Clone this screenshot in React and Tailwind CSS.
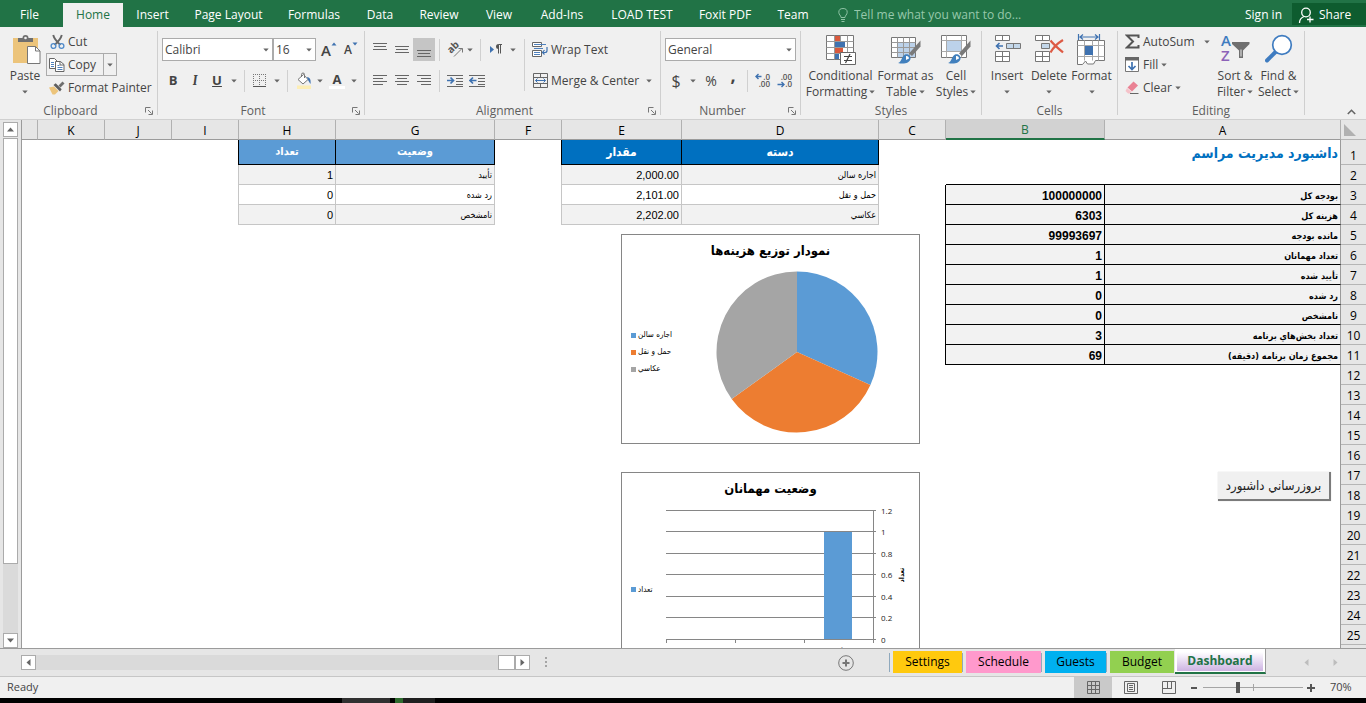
import React from "react";

/* ---------- small building blocks ---------- */

function Caret({ className = "" }) {
  return (
    <svg width="6" height="4" viewBox="0 0 6 4" className={`shrink-0 ${className}`} aria-hidden="true">
      <path d="M0.3 0.5h5.4L3 3.5z" fill="#666" />
    </svg>
  );
}

function Launcher() {
  return (
    <svg width="8" height="8" viewBox="0 0 8 8" fill="none" stroke="#777" aria-hidden="true">
      <path d="M0.5 5.5v-5h5M3 3l3.6 3.6M7.5 3.5v4h-4" />
    </svg>
  );
}

function Divider() {
  return <div className="my-1 w-px shrink-0 bg-[#cfcfcf]" />;
}

function Sep() {
  return <span className="h-[22px] w-px shrink-0 bg-[#d0d0d0]" />;
}

function Group({ label, width, launcher, children }) {
  return (
    <>
      <section className={`flex shrink-0 flex-col ${width}`} aria-label={label}>
        <div className="flex h-[76px]">{children}</div>
        <div className="flex h-4 items-center">
          <span className={`flex-1 text-center leading-4 text-[#5e5e5e] ${launcher ? "pr-1" : ""}`}>{label}</span>
          {launcher && (
            <button className="mr-1 flex" aria-label={`${label} settings`}>
              <Launcher />
            </button>
          )}
        </div>
      </section>
      <Divider />
    </>
  );
}

function Tool({ label, width = "w-[22px]", active, children }) {
  return (
    <button
      aria-label={label}
      className={`flex h-[23px] shrink-0 items-center justify-center ${width} ${active ? "bg-[#c5c5c5]" : ""}`}
    >
      {children}
    </button>
  );
}

function SmallButton({ icon, label, caret }) {
  return (
    <button className="flex h-[23px] items-center whitespace-nowrap">
      <span className="flex w-5 shrink-0 justify-center">{icon}</span>
      <span className="px-px">{label}</span>
      {caret && <Caret className={caret} />}
    </button>
  );
}

function BigButton({ icon, lines, width }) {
  return (
    <button className={`flex shrink-0 flex-col items-center pt-[7px] ${width}`}>
      <span className="flex h-[34px] items-start">{icon}</span>
      <span className="flex h-4 items-center whitespace-nowrap leading-4">{lines[0]}</span>
      <span className="flex h-4 items-center gap-0.5 whitespace-nowrap leading-4">
        {lines[1]}
        <Caret />
      </span>
    </button>
  );
}

function Picker({ label, value, width }) {
  return (
    <label className={`relative block h-[23px] ${width}`}>
      <span className="sr-only">{label}</span>
      <select
        defaultValue={value}
        className="h-full w-full appearance-none rounded-none border border-[#ababab] bg-white pl-0.5 text-[#444] outline-none"
      >
        <option>{value}</option>
      </select>
      <Caret className="absolute top-[10px] right-1" />
    </label>
  );
}

/* ---------- ribbon icons ---------- */

const PasteIcon = (
  <svg width="30" height="31" viewBox="0 0 30 31" aria-hidden="true">
    <path d="M1 4h25v25H1z" fill="#ecc47b" />
    <path d="M6 8V4h4.500a3 3 0 0 1 6 0H21v4z" fill="#6f6f6f" />
    <circle cx="13.500" cy="4" r="1.300" fill="#f0f0f0" />
    <path d="M15.500 12.500h8l4.500 4.500v12.500H15.500z" fill="#fff" stroke="#777" />
    <path d="M23.500 12.500V17H28" fill="none" stroke="#777" />
  </svg>
);

const CutIcon = (
  <svg width="15" height="16" viewBox="0 0 15 16" fill="none" aria-hidden="true">
    <path d="M3.200 1C4 4 6.500 7.500 10.500 11M11.800 1C11 4 8.500 7.500 4.500 11" stroke="#666" strokeWidth="1.900" />
    <circle cx="3.500" cy="12" r="2.400" stroke="#4f8ac9" strokeWidth="1.300" />
    <circle cx="11.500" cy="12" r="2.400" stroke="#4f8ac9" strokeWidth="1.300" />
  </svg>
);

const CopyIcon = (
  <svg width="16" height="14" viewBox="0 0 16 14" aria-hidden="true">
    <path d="M.5.5h5l3 3v7h-8z" fill="#fff" stroke="#666" />
    <path d="M2 4.500h3M2 6.500h3M2 8.500h3" stroke="#4f81bd" />
    <path d="M6.500 3.500h5l3.500 3v7H6.500z" fill="#fff" stroke="#666" />
    <path d="M11 3.500v3.500h4" fill="none" stroke="#666" />
    <path d="M8.500 7.500h2M8.500 9.500h5M8.500 11.500h5" stroke="#4f81bd" />
  </svg>
);

const PainterIcon = (
  <svg width="16" height="14" viewBox="0 0 16 14" aria-hidden="true">
    <path d="M0 6.500l5-1 4.500 4.500L6 13.500H3.500z" fill="#ecc47b" />
    <path d="M4.500 4l2.200-1.800 6 6L11 10.500z" fill="#5e5e5e" />
    <path d="M9.500 4.500L13.500.5l2 2-4 4z" fill="#6e6e6e" />
  </svg>
);

const GrowFont = (
  <span className="flex items-start">
    <span className="text-[15px] leading-5 font-semibold">A</span>
    <svg width="6" height="4" viewBox="0 0 6 4" className="mt-0.5" aria-hidden="true">
      <path d="M.5 3.500h5L3 .5z" fill="#3f72b0" />
    </svg>
  </span>
);

const ShrinkFont = (
  <span className="flex items-start">
    <span className="text-xs leading-5 font-semibold">A</span>
    <svg width="6" height="4" viewBox="0 0 6 4" className="mt-0.5" aria-hidden="true">
      <path d="M.5.5h5L3 3.500z" fill="#3f72b0" />
    </svg>
  </span>
);

const BordersIcon = (
  <svg width="13" height="13" viewBox="0 0 13 13" fill="none" stroke="#777" aria-hidden="true">
    <path d="M0 .5h13M0 6.500h13M.5 0v12M6.500 0v12M12.500 0v12" strokeDasharray="1 1" />
    <path d="M0 12.500h13" stroke="#555" />
  </svg>
);

const FillColorIcon = (
  <svg width="15" height="17" viewBox="0 0 15 17" aria-hidden="true">
    <path d="M1 7.500L6.500 2.500l4.500 5-5 4.500z" fill="#fff" stroke="#777" />
    <path d="M4.500 5V2.500a1.500 1.500 0 0 1 3 0V6" fill="none" stroke="#777" />
    <path d="M10 5c3 .5 4 2.500 3.500 7-1-1.500-2-3-2.500-4z" fill="#3f72b0" />
    <path d="M0 13.500h14V17H0z" fill="#fdeeb5" />
  </svg>
);

const FontColorIcon = (
  <span className="flex flex-col items-center">
    <span className="text-[13px] leading-[14px] font-bold">A</span>
    <span className="h-[3px] w-4 bg-white" />
  </span>
);

function Lines({ rows, top = 0 }) {
  return (
    <svg width="14" height="15" viewBox="0 0 14 15" stroke="#666" aria-hidden="true">
      {rows.map(([x, w], i) => (
        <path key={i} d={`M${x} ${top + i * 3 + 0.5}h${w}`} />
      ))}
    </svg>
  );
}
const VERTICAL = [[0, 14], [1, 12], [0, 14]];
const LEFT = [[0, 14], [0, 10], [0, 14], [0, 10]];
const CENTER = [[0, 14], [2, 10], [0, 14], [2, 10]];
const RIGHT = [[0, 14], [4, 10], [0, 14], [4, 10]];

const OrientationIcon = (
  <svg width="17" height="16" viewBox="0 0 17 16" aria-hidden="true">
    <text x="0" y="0" transform="translate(4 12) rotate(-45)" fontSize="10" fontWeight="700" fill="#555">
      ab
    </text>
    <path d="M7 14.500L15 6.500M11.500 6.500H15.500V10.500" fill="none" stroke="#777" />
  </svg>
);

const DirectionIcon = (
  <svg width="12" height="11" viewBox="0 0 12 11" aria-hidden="true">
    <path d="M0 2l4 3.500L0 9z" fill="#3f72b0" />
    <path d="M8.500.5h3.500M8.500.5v9M10.500.5v9" stroke="#555" fill="none" />
    <path d="M8.500 0a2.500 2.500 0 0 0 0 5z" fill="#555" />
  </svg>
);

function IndentIcon({ out }) {
  return (
    <svg width="16" height="14" viewBox="0 0 16 14" fill="none" aria-hidden="true">
      <path d="M0 1.500h16M9 4.500h7M9 7.500h7M0 12.500h16M9 10.500h7" stroke="#666" />
      <path
        d={out ? "M7.500 6.500H1M4 3.500l-3 3 3 3" : "M0 6.500h6.500M3.500 3.500l3 3-3 3"}
        stroke="#3f72b0"
        strokeWidth="1.700"
      />
    </svg>
  );
}

const WrapIcon = (
  <svg width="16" height="16" viewBox="0 0 16 16" fill="none" aria-hidden="true">
    <path d="M.5.5h9v4h-9zM.5 8.500h9v6h-9z" stroke="#666" fill="#fff" />
    <path d="M2 2.500h12M2 6.500h9M2 10.500h6M2 12.500h6" stroke="#4f81bd" />
    <path d="M15 5v3.500a2 2 0 0 1-2 2h-2M12.500 8L10.500 10.500l2 2" stroke="#3f72b0" strokeWidth="1.200" />
  </svg>
);

const MergeIcon = (
  <svg width="15" height="15" viewBox="0 0 15 15" fill="none" aria-hidden="true">
    <path d="M.5.5h14v14H.5zM.5 4.500h14M.5 10.500h14M7.500.5v4M7.500 10.500v4" stroke="#666" />
    <path d="M2.500 7.500h10M4.500 5.500l-2 2 2 2M10.500 5.500l2 2-2 2" stroke="#3f72b0" />
  </svg>
);

function DecimalIcon({ more }) {
  return (
    <svg width="16" height="15" viewBox="0 0 16 15" aria-hidden="true">
      <text x="15" y="6.500" textAnchor="end" fontSize="8" fontWeight="600" fill="#555">
        {more ? ".0" : ".00"}
      </text>
      <text x="15" y="14" textAnchor="end" fontSize="8" fontWeight="600" fill="#555">
        {more ? ".00" : ".0"}
      </text>
      <path
        d={more ? "M6.500 3.500H1M3.500 1L1 3.500 3.500 6" : "M0.500 11.500H7M4.500 9L7 11.500 4.500 14"}
        fill="none"
        stroke="#3f72b0"
        strokeWidth="1.400"
      />
    </svg>
  );
}

const ConditionalIcon = (
  <svg width="30" height="31" viewBox="0 0 30 31" aria-hidden="true">
    <path d="M.5 1.500h27v24H.5z" fill="#fff" stroke="#777" />
    <path d="M.5 7.500h27M.5 13.500h27M.5 19.500h27M8.500 1.500v24M14.500 1.500v24M21.500 1.500v24" stroke="#999" fill="none" />
    <path d="M9 2h5v5H9zM9 14h8v5H9z" fill="#d9593d" />
    <path d="M9 8h10v5H9zM9 20h4v5H9z" fill="#3f72b0" />
    <path d="M14.500 18.500h15v12h-15z" fill="#fff" stroke="#666" />
    <path d="M18 22.500h8M18 26.500h8M24 20l-4.500 9" stroke="#444" strokeWidth="1.200" />
  </svg>
);

const Brush = (
  <>
    <path d="M29.500 6.500v6L21 22l-3-2.500z" fill="#7a7a7a" />
    <path d="M7 29c4-1 3-6 7-8.500 3-1 6 1 5.500 4.500C18.500 29 13 30.500 7 29z" fill="#4180bd" />
    <path d="M15 22a2.500 2.500 0 0 1 3 2.500L15 26z" fill="#fff" />
  </>
);

const FormatTableIcon = (
  <svg width="30" height="31" viewBox="0 0 30 31" aria-hidden="true">
    <path d="M.5 3.500h24v20H.5z" fill="#fff" stroke="#777" />
    <path d="M7 9h17v14H7z" fill="#bcd2ea" />
    <path d="M.5 8.500h24M.5 13.500h24M.5 18.500h24M6.500 3.500v20M12.500 3.500v20M18.500 3.500v20" stroke="#999" fill="none" />
    {Brush}
  </svg>
);

const CellStylesIcon = (
  <svg width="30" height="31" viewBox="0 0 30 31" aria-hidden="true">
    <path d="M.5 1.500h25v22H.5z" fill="#fff" stroke="#777" />
    <path d="M.5 6.500h25M.5 17.500h25M5.500 1.500v22M20.500 1.500v22" stroke="#aaa" fill="none" />
    <path d="M6 7h14v10H6z" fill="#bcd2ea" />
    {Brush}
  </svg>
);

const InsertIcon = (
  <svg width="27" height="30" viewBox="0 0 27 30" aria-hidden="true">
    <path d="M1.500 1.500h14v5h-14zM8.500 1.500v5M1.500 17.500h14v10h-14zM8.500 17.500v10M1.500 22.500h14" fill="#fff" stroke="#777" />
    <path d="M12.500 9.500h14v5h-14zM19.500 9.500v5" fill="#c3d7ea" stroke="#777" />
    <path d="M9 12H3M5.500 9L2.500 12l3 3" fill="none" stroke="#3f72b0" strokeWidth="1.600" />
  </svg>
);

const DeleteIcon = (
  <svg width="30" height="30" viewBox="0 0 30 30" aria-hidden="true">
    <path d="M1.500 1.500h14v5h-14zM8.500 1.500v5M1.500 17.500h14v10h-14zM8.500 17.500v10M1.500 22.500h14" fill="#fff" stroke="#777" />
    <path d="M7.500 9.500h8v5h-8z" fill="#c3d7ea" stroke="#777" />
    <path d="M16.500 6.500C20 11 25 15 29 18.500M29 6C24 9 19 14 16.500 18.500" fill="none" stroke="#dd5a44" strokeWidth="2.200" />
  </svg>
);

const FormatCellsIcon = (
  <svg width="29" height="31" viewBox="0 0 29 31" aria-hidden="true">
    <path d="M1.500 0v6M22.500 0v6M3.500 3h17M6 .5L3 3l3 2.500M18 .5L21 3l-3 2.500" fill="none" stroke="#3f72b0" strokeWidth="1.200" />
    <path d="M.5 6.500h27v20h-9l-2 3.500h-6l-2-3-3 3.500h-5z" fill="#fff" stroke="#777" />
    <path d="M.5 11.500h27M.5 22.500h27M7.500 6.500v20M15.500 6.500v20M21.500 6.500v20" stroke="#aaa" fill="none" />
    <path d="M8 12h8v9H8z" fill="#3f72b0" />
  </svg>
);

const SumIcon = (
  <svg width="15" height="15" viewBox="0 0 15 15" fill="none" aria-hidden="true">
    <path d="M13.500 4V1.500H2L8 7.500 2 13.500h11.500V11" stroke="#555" strokeWidth="2" />
  </svg>
);

const FillIcon = (
  <svg width="14" height="15" viewBox="0 0 14 15" fill="none" aria-hidden="true">
    <path d="M.5.5h13v14H.5z" fill="#fff" stroke="#777" />
    <path d="M0 0h14v3.500H0z" fill="#666" />
    <path d="M7 5v7M3.500 9L7 12.500 10.500 9" stroke="#3f72b0" strokeWidth="1.700" />
  </svg>
);

const ClearIcon = (
  <svg width="14" height="14" viewBox="0 0 14 14" aria-hidden="true">
    <path d="M8.500.5l4.500 4-6 6-4.500-4z" fill="#ea8294" />
    <path d="M2 7l4.500 4L5 12.500H3L.5 10z" fill="#f5c2c9" />
    <path d="M5 12.500h8.500" stroke="#666" />
  </svg>
);

const SortIcon = (
  <svg width="30" height="30" viewBox="0 0 30 30" aria-hidden="true">
    <text x="1" y="12" fontSize="15" fontWeight="600" fill="#3f7cc0">A</text>
    <text x="1" y="27" fontSize="15" fontWeight="600" fill="#8c62b8">Z</text>
    <path d="M12 8h17.500v2L23 16.500V24h-4v-7.500L12 10z" fill="#6f6f6f" />
    <path d="M20.500 15.500v7h1v-7z" fill="#eee" />
  </svg>
);

const FindIcon = (
  <svg width="28" height="29" viewBox="0 0 28 29" aria-hidden="true">
    <path d="M2 26.500L11 17.500" stroke="#3f7cc0" strokeWidth="4" strokeLinecap="round" />
    <circle cx="17" cy="11" r="9.300" fill="#fff" stroke="#3f7cc0" strokeWidth="1.700" />
  </svg>
);

/* ---------- title bar and ribbon ---------- */

const MENU = [
  ["Insert", "w-[59px]"],
  ["Page Layout", "w-[93px]"],
  ["Formulas", "w-[78px]"],
  ["Data", "w-[54px]"],
  ["Review", "w-16"],
  ["View", "w-14"],
  ["Add-Ins", "w-[70px]"],
  ["LOAD TEST", "w-[90px]"],
  ["Foxit PDF", "w-[76px]"],
  ["Team", "w-[60px]"],
];

function MenuBar() {
  return (
    <nav className="flex h-[27px] shrink-0 items-stretch bg-[#217346] pt-[3px] text-[12px] whitespace-nowrap text-white">
      <button className="w-[63px] pr-1">File</button>
      <button className="w-[60px] bg-[#f0f0f0] text-[#217346]">Home</button>
      {MENU.map(([name, width]) => (
        <button key={name} className={width}>
          {name}
        </button>
      ))}
      <label className="flex min-w-0 flex-1 items-center gap-1.5 pl-[15px]">
        <svg width="10" height="14" viewBox="0 0 10 14" fill="none" stroke="#8fc3a5" aria-hidden="true">
          <path d="M3 9.500C3 7.500 .8 6.700 .8 4.300a4.200 3.800 0 0 1 8.400 0C9.200 6.700 7 7.500 7 9.500zM3 11.500h4M3.500 13.500h3" />
        </svg>
        <input
          aria-label="Tell me what you want to do"
          placeholder="Tell me what you want to do..."
          className="min-w-0 flex-1 bg-transparent text-white outline-none placeholder:text-[#97c8ab]"
        />
      </label>
      <button className="px-2.5">Sign in</button>
      <button className="mb-0.5 flex w-[74px] items-center gap-1 bg-[#0e5c2f] pt-0.5 pl-1.5">
        <svg width="17" height="17" viewBox="0 0 17 17" fill="none" stroke="#fff" strokeWidth="1.300" aria-hidden="true">
          <circle cx="8" cy="5.500" r="4.300" />
          <path d="M1.500 16c0-3.500 2-5.500 4.500-6.500M12 9.500v6M9 12.500h6.500" />
        </svg>
        Share
      </button>
    </nav>
  );
}

function Ribbon() {
  return (
    <div className="flex h-[93px] shrink-0 overflow-hidden border-b border-[#d0d0d0] bg-[#f0f0f0] text-[12px] text-[#444]">
      <Group label="Clipboard" width="w-[157px]" launcher>
        <button className="flex w-[46px] shrink-0 flex-col items-center pt-[7px] pl-1">
          <span className="flex h-[34px] pl-1">{PasteIcon}</span>
          <span className="leading-4">Paste</span>
          <span className="flex h-4 items-center">
            <Caret />
          </span>
        </button>
        <div className="flex flex-1 flex-col items-start pt-[3px]">
          <div className="pl-px">
            <SmallButton icon={CutIcon} label="Cut" />
          </div>
          <div className="flex h-[23px] border border-[#ababab]">
            <button className="flex items-center pr-1.5 whitespace-nowrap">
              <span className="flex w-5 justify-center">{CopyIcon}</span>
              <span className="px-px">Copy</span>
            </button>
            <button aria-label="Copy options" className="flex w-[13px] items-center justify-center border-l border-[#ababab]">
              <Caret />
            </button>
          </div>
          <div className="pl-px">
            <SmallButton icon={PainterIcon} label="Format Painter" />
          </div>
        </div>
      </Group>

      <Group label="Font" width="w-[206px]" launcher>
        <div className="flex flex-col gap-2 pt-[11px] pl-1">
          <div className="flex">
            <Picker label="Font name" value="Calibri" width="w-[111px]" />
            <Picker label="Font size" value="16" width="w-[43px]" />
            <span className="w-0.5" />
            <Tool label="Increase font size">{GrowFont}</Tool>
            <Tool label="Decrease font size">{ShrinkFont}</Tool>
          </div>
          <div className="flex items-center text-[13px]">
            <Tool label="Bold">
              <b>B</b>
            </Tool>
            <Tool label="Italic">
              <i className="font-serif font-semibold">I</i>
            </Tool>
            <Tool label="Underline">
              <b className="underline">U</b>
            </Tool>
            <Tool label="Underline style" width="w-3">
              <Caret />
            </Tool>
            <span className="w-1" />
            <Sep />
            <Tool label="Borders" width="w-7">{BordersIcon}</Tool>
            <Tool label="Border style" width="w-2">
              <Caret />
            </Tool>
            <span className="w-1.5" />
            <Sep />
            <span className="w-1" />
            <Tool label="Fill color" width="w-6">{FillColorIcon}</Tool>
            <Tool label="Fill options" width="w-2">
              <Caret />
            </Tool>
            <Tool label="Font color" width="w-[26px]">{FontColorIcon}</Tool>
            <Tool label="Font color options" width="w-2">
              <Caret />
            </Tool>
          </div>
        </div>
      </Group>

      <Group label="Alignment" width="w-[295px]" launcher>
        <div className="flex w-[159px] shrink-0 flex-col gap-2 pt-[11px] pl-1">
          <div className="flex items-center">
            <Tool label="Top align"><Lines rows={VERTICAL} top={1} /></Tool>
            <Tool label="Middle align"><Lines rows={VERTICAL} top={4} /></Tool>
            <Tool label="Bottom align" active><Lines rows={VERTICAL} top={8} /></Tool>
            <span className="w-1" />
            <Sep />
            <span className="w-1" />
            <Tool label="Orientation">{OrientationIcon}</Tool>
            <Tool label="Orientation options" width="w-2"><Caret /></Tool>
            <span className="w-1.5" />
            <Sep />
            <span className="w-1" />
            <Tool label="Text direction">{DirectionIcon}</Tool>
            <Tool label="Direction options" width="w-3"><Caret /></Tool>
          </div>
          <div className="flex items-center">
            <Tool label="Align left"><Lines rows={LEFT} top={2} /></Tool>
            <Tool label="Center"><Lines rows={CENTER} top={2} /></Tool>
            <Tool label="Align right"><Lines rows={RIGHT} top={2} /></Tool>
            <span className="w-1" />
            <Sep />
            <span className="w-1" />
            <Tool label="Decrease indent"><IndentIcon /></Tool>
            <Tool label="Increase indent"><IndentIcon out /></Tool>
          </div>
        </div>
        <div className="mt-3 mb-3 w-px bg-[#d0d0d0]" />
        <div className="flex flex-1 flex-col gap-2 pt-[11px] pl-[5px]">
          <SmallButton icon={WrapIcon} label="Wrap Text" />
          <SmallButton icon={MergeIcon} label="Merge & Center" caret="ml-1.5" />
        </div>
      </Group>

      <Group label="Number" width="w-[139px]" launcher>
        <div className="flex flex-col gap-2 pt-[11px] pl-1">
          <Picker label="Number format" value="General" width="w-[131px]" />
          <div className="flex items-center text-base">
            <Tool label="Accounting format">$</Tool>
            <Tool label="Accounting options" width="w-3"><Caret /></Tool>
            <Tool label="Percent" width="w-6"><span className="text-sm">%</span></Tool>
            <Tool label="Comma style" width="w-5">
              <span className="pb-3 text-lg leading-3 font-bold">,</span>
            </Tool>
            <span className="w-1" />
            <Sep />
            <span className="w-1" />
            <Tool label="Increase decimal"><DecimalIcon more /></Tool>
            <Tool label="Decrease decimal"><DecimalIcon /></Tool>
          </div>
        </div>
      </Group>

      <Group label="Styles" width="w-[180px]">
        <BigButton icon={ConditionalIcon} lines={["Conditional", "Formatting"]} width="w-[79px]" />
        <BigButton icon={FormatTableIcon} lines={["Format as", "Table"]} width="w-[51px]" />
        <BigButton icon={CellStylesIcon} lines={["Cell", "Styles"]} width="w-[50px]" />
      </Group>

      <Group label="Cells" width="w-[135px]">
        <span className="w-1" />
        <BigButton icon={InsertIcon} lines={["Insert", ""]} width="w-[42px]" />
        <BigButton icon={DeleteIcon} lines={["Delete", ""]} width="w-[42px]" />
        <BigButton icon={FormatCellsIcon} lines={["Format", ""]} width="w-[43px]" />
      </Group>

      <Group label="Editing" width="w-[186px]">
        <div className="flex w-[95px] shrink-0 flex-col items-start pt-[3px] pl-1">
          <SmallButton icon={SumIcon} label="AutoSum" caret="ml-2" />
          <SmallButton icon={FillIcon} label="Fill" caret="ml-0.5" />
          <SmallButton icon={ClearIcon} label="Clear" caret="ml-0.5" />
        </div>
        <BigButton icon={SortIcon} lines={["Sort &", "Filter"]} width="w-[44px]" />
        <BigButton icon={FindIcon} lines={["Find &", "Select"]} width="w-[43px]" />
      </Group>

      <div className="flex flex-1 items-end justify-end pr-2.5 pb-1">
        <button aria-label="Collapse the ribbon">
          <svg width="9" height="6" viewBox="0 0 9 6" fill="none" aria-hidden="true">
            <path d="M.8 5L4.500 1.300 8.200 5" stroke="#666" strokeWidth="1.600" />
          </svg>
        </button>
      </div>
    </div>
  );
}

/* ---------- worksheet ---------- */

const COLUMNS = [
  ["A", "w-[236px]"],
  ["B", "w-[159px]"],
  ["C", "w-[67px]"],
  ["D", "w-[197px]"],
  ["E", "w-[120px]"],
  ["F", "w-[67px]"],
  ["G", "w-[159px]"],
  ["H", "w-[97px]"],
  ["I", "w-[67px]"],
  ["J", "w-[67px]"],
  ["K", "w-[67px]"],
  ["", ""],
];

const SUMMARY = [
  ["بودجه كل", "100000000"],
  ["هزينه كل", "6303"],
  ["مانده بودجه", "99993697"],
  ["تعداد مهمانان", "1"],
  ["تأييد شده", "1"],
  ["رد شده", "0"],
  ["نامشخص", "0"],
  ["تعداد بخش‌هاي برنامه", "3"],
  ["مجموع زمان برنامه (دقيقه)", "69"],
];
const COSTS = [
  ["اجاره سالن", "2,000.00"],
  ["حمل و نقل", "2,101.00"],
  ["عكاسي", "2,202.00"],
];
const GUESTS = [
  ["تأييد", "1"],
  ["رد شده", "0"],
  ["نامشخص", "0"],
];

const LIST_CELL = "border-r border-b border-[#c6c6c6] text-right";
const PERSIAN = "font-['DejaVu_Sans_Condensed','DejaVu_Sans',sans-serif]";

function cellFor(row, col) {
  if (col === "A") {
    if (row === 1)
      return ["داشبورد مديريت مراسم", `border-r border-r-[#9b9b9b] text-right text-[14px] leading-5 font-bold text-[#0070c0] ${PERSIAN}`];
    if (row === 2) return ["", "border-r border-b border-r-[#9b9b9b] border-b-black"];
    if (row <= 11)
      return [
        SUMMARY[row - 3][0],
        `border-r border-b border-r-[#9b9b9b] border-b-black bg-[#f2f2f2] text-right align-bottom text-[9px] leading-4 font-bold ${PERSIAN}`,
      ];
    return ["", "border-r border-r-[#9b9b9b]"];
  }
  if (col === "B") {
    if (row === 2) return ["", "border-b border-black"];
    if (row > 2 && row <= 11)
      return [SUMMARY[row - 3][1], "border-r border-b border-black bg-[#f2f2f2] text-right align-bottom text-[12px] leading-4 font-bold"];
    return ["", ""];
  }
  if (col === "C") return ["", row > 2 && row <= 11 ? "border-r border-black" : ""];
  if (row > 4) return ["", ""];
  const shade = row % 2 === 0 ? "bg-[#f2f2f2]" : "bg-white";
  if (col === "D" || col === "E") {
    if (row === 1)
      return [
        col === "D" ? "دسته" : "مقدار",
        `border-r border-b border-black bg-[#0070c0] text-center text-[12px] font-bold text-white ${PERSIAN}`,
      ];
    return col === "D"
      ? [COSTS[row - 2][0], `${LIST_CELL} ${shade} text-[9px] ${PERSIAN}`]
      : [COSTS[row - 2][1], `${LIST_CELL} ${shade} text-[11px]`];
  }
  if (col === "G" || col === "H") {
    if (row === 1)
      return [
        col === "G" ? "وضعيت" : "تعداد",
        `border-r border-b border-black bg-[#5b9bd5] text-center text-[11px] font-bold text-white ${PERSIAN}`,
      ];
    return col === "G"
      ? [GUESTS[row - 2][0], `${LIST_CELL} ${shade} text-[9px] ${PERSIAN}`]
      : [GUESTS[row - 2][1], `${LIST_CELL} ${shade} text-[11px]`];
  }
  if (col === "F" || col === "I") return ["", row === 1 ? "border-r border-black" : "border-r border-[#c6c6c6]"];
  return ["", ""];
}

function Grid() {
  const rows = Array.from({ length: 26 }, (_, i) => i + 1);
  return (
    <table dir="rtl" className="w-full table-fixed border-separate border-spacing-0 text-black">
      <thead className="bg-[#e6e6e6] font-['Open_Sans','Noto_Sans',sans-serif] text-[12px]">
        <tr>
          <th className="h-5 w-[25px] border-b border-[#b5b5b5] p-0">
            <svg width="12" height="12" viewBox="0 0 12 12" className="mr-2.5" aria-hidden="true">
              <path d="M0 0v12h12z" fill="#b1b1b1" />
            </svg>
          </th>
          {COLUMNS.map(([name, width]) => (
            <th
              key={name}
              scope="col"
              className={`h-5 px-0 pt-0.5 pb-0 leading-4 font-normal ${width} ${
                name === "B"
                  ? "border-r border-b-2 border-r-[#b1b1b1] border-b-[#217346] bg-[#d2d2d2] text-[#217346]"
                  : "border-r border-b border-r-[#b1b1b1] border-b-[#9b9b9b]"
              }`}
            >
              {name}
            </th>
          ))}
        </tr>
      </thead>
      <tbody className="font-['Liberation_Sans',sans-serif]">
        {rows.map((row) => (
          <tr key={row}>
            <th
              scope="row"
              className={`border-b border-[#b5b5b5] bg-[#e6e6e6] p-0 text-center align-bottom font-['Open_Sans','Noto_Sans',sans-serif] text-[12px] leading-4 font-normal ${
                row === 1 ? "h-[25px]" : "h-5"
              }`}
            >
              {row}
            </th>
            {COLUMNS.map(([col]) => {
              const [text, style] = cellFor(row, col);
              return (
                <td key={col} className={`overflow-hidden px-0.5 py-0 leading-4 whitespace-nowrap ${style}`}>
                  {text}
                </td>
              );
            })}
          </tr>
        ))}
      </tbody>
    </table>
  );
}

const SLICES = [
  { name: "اجاره سالن", value: 2000, fill: "#5b9bd5", swatch: "bg-[#5b9bd5]" },
  { name: "حمل و نقل", value: 2101, fill: "#ed7d31", swatch: "bg-[#ed7d31]" },
  { name: "عكاسي", value: 2202, fill: "#a5a5a5", swatch: "bg-[#a5a5a5]" },
];

function slicePaths() {
  const total = SLICES.reduce((sum, s) => sum + s.value, 0);
  const point = (t) => `${81 + 80.5 * Math.sin(t)} ${81 - 80.5 * Math.cos(t)}`;
  let angle = 0;
  return SLICES.map((s) => {
    const next = angle + (s.value / total) * 2 * Math.PI;
    const d = `M81 81L${point(angle)}A80.5 80.5 0 0 1 ${point(next)}Z`;
    angle = next;
    return { d, fill: s.fill };
  });
}

function LegendItem({ swatch, name }) {
  return (
    <li className="flex h-[17px] items-center gap-0.5 text-[8px] whitespace-nowrap text-black">
      <span className={`size-[5px] ${swatch}`} />
      {name}
    </li>
  );
}

function CostChart() {
  return (
    <figure className={`absolute top-[114px] right-[446px] flex h-[210px] w-[299px] flex-col border border-[#868686] bg-white ${PERSIAN}`}>
      <figcaption dir="rtl" className="h-9 pt-1.5 text-center text-[13px] leading-5 font-bold text-black">
        نمودار توزيع هزينه‌ها
      </figcaption>
      <div className="flex items-center pl-[9px]">
        <ul className="flex w-[85px] flex-col">
          {SLICES.map((s) => (
            <LegendItem key={s.name} swatch={s.swatch} name={s.name} />
          ))}
        </ul>
        <svg width="162" height="162" viewBox="0 0 162 162" role="img" aria-label="نمودار توزيع هزينه‌ها">
          {slicePaths().map((s) => (
            <path key={s.fill} d={s.d} fill={s.fill} />
          ))}
        </svg>
      </div>
    </figure>
  );
}

function GuestChart() {
  const ticks = ["1.2", "1", "0.8", "0.6", "0.4", "0.2", "0"];
  return (
    <figure className={`absolute top-[352px] right-[446px] flex h-[210px] w-[299px] flex-col border border-[#868686] bg-white ${PERSIAN}`}>
      <figcaption dir="rtl" className="h-7 pt-1.5 text-center text-[13px] leading-5 font-bold text-black">
        وضعيت مهمانان
      </figcaption>
      <div className="flex pl-[9px]">
        <ul className="flex w-[35px] flex-col pt-20">
          <LegendItem swatch="bg-[#5b9bd5]" name="تعداد" />
        </ul>
        <svg width="250" height="170" viewBox="0 0 250 170" role="img" aria-label="وضعيت مهمانان">
          {ticks.map((t, i) => {
            const y = Math.floor(i * 21.5) + 9.5;
            return (
              <g key={t} className="font-['Open_Sans','Noto_Sans',sans-serif]">
                <path d={`M0 ${y}h210`} stroke="#868686" />
                <text x="215" y={y + 3} fontSize="8" fill="#222">
                  {t}
                </text>
              </g>
            );
          })}
          <path d="M207.500 9v130M.5 138v4M69.500 138v4M138.500 138v4M207.500 138v4" stroke="#868686" />
          <path d="M158 31h28v107h-28z" fill="#5b9bd5" />
          <text transform="translate(238 74) rotate(-90)" textAnchor="middle" fontSize="7" fontWeight="700">
            تعداد
          </text>
          <text x="173" y="155" textAnchor="middle" fontSize="8">
            تأييد
          </text>
        </svg>
      </div>
    </figure>
  );
}

function ScrollArrow({ d, label }) {
  return (
    <button aria-label={label} className="flex size-[15px] shrink-0 items-center justify-center border border-[#ababab] bg-white">
      <svg width="7" height="7" viewBox="0 0 7 7" aria-hidden="true">
        <path d={d} fill="#666" />
      </svg>
    </button>
  );
}

function Sheet() {
  return (
    <main className="flex min-h-0 flex-1 bg-[#e6e6e6]">
      <div className="flex w-[21px] shrink-0 flex-col pt-0.5 pl-[3px]">
        <ScrollArrow d="M0 5.500h7L3.500 1.500z" label="Scroll up" />
        <div className="mt-px flex w-[15px] flex-1 flex-col bg-[#dadada]">
          <div className="h-[86%] border border-[#ababab] bg-white" />
        </div>
        <ScrollArrow d="M0 1.500h7L3.500 5.500z" label="Scroll down" />
      </div>
      <div className="relative min-w-0 flex-1 overflow-hidden border-l border-[#9b9b9b] bg-white">
        <Grid />
        <CostChart />
        <GuestChart />
        <button
          dir="rtl"
          className={`absolute top-[352px] right-[35px] h-[29px] w-[113px] border-r-2 border-b-2 border-[#7b7b7b] bg-[#f0f0f0] text-[13px] whitespace-nowrap text-[#222] shadow-[0_0_1px_#ccc] ${PERSIAN}`}
        >
          بروزرساني داشبورد
        </button>
      </div>
    </main>
  );
}

/* ---------- sheet tabs and status bar ---------- */

const SHEETS = [
  ["Settings", "w-[69px] bg-[#ffc90e]"],
  ["Schedule", "w-[75px] bg-[#ff99cc]"],
  ["Guests", "w-[61px] bg-[#00b0f0]"],
  ["Budget", "w-16 bg-[#92d050]"],
];

function SheetTabs() {
  return (
    <div className="flex h-7 shrink-0 border-t border-[#9b9b9b] bg-[#e6e6e6]">
      <div className="flex items-center pl-[21px]">
        <ScrollArrow d="M5.500 0v7L1.500 3.500z" label="Scroll left" />
        <div className="flex h-[15px] w-[479px] justify-end bg-[#dadada]">
          <div className="w-[17px] border border-[#ababab] bg-white" />
        </div>
        <ScrollArrow d="M1.500 0v7L5.500 3.500z" label="Scroll right" />
        <svg width="3" height="11" viewBox="0 0 3 11" className="ml-[15px]" aria-hidden="true">
          <path d="M0 0h2v2H0zM0 4h2v2H0zM0 8h2v2H0z" fill="#a5a5a5" />
        </svg>
      </div>
      <div className="flex-1" />
      <button aria-label="New sheet" className="mr-[35px]">
        <svg width="16" height="16" viewBox="0 0 16 16" fill="none" stroke="#777" aria-hidden="true">
          <circle cx="8" cy="8" r="7.300" />
          <path d="M4.500 8h7M8 4.500v7" strokeWidth="2" />
        </svg>
      </button>
      <div className="flex text-[12px] text-black">
        {SHEETS.map(([name, style]) => (
          <div key={name} className="flex py-0.5">
            <span className="my-0.5 w-px bg-[#8fa9bd]" />
            <button className={`ml-[3px] h-[22px] ${style}`}>{name}</button>
          </div>
        ))}
        <button className="ml-px h-[25px] w-[91px] border-r border-b-2 border-r-[#9b9b9b] border-b-[#217346] bg-white px-0.5 pt-[3px] pb-px font-bold text-[#217346]">
          <span className="block h-full bg-linear-to-b from-white to-[#cdb3e2] leading-[18px]">Dashboard</span>
        </button>
      </div>
      <div className="flex w-[100px] items-center gap-6 pl-[38px]">
        <button aria-label="Previous sheet">
          <svg width="5" height="7" viewBox="0 0 5 7" aria-hidden="true">
            <path d="M4.500 0v7L.5 3.500z" fill="#bdbdbd" />
          </svg>
        </button>
        <button aria-label="Next sheet">
          <svg width="5" height="7" viewBox="0 0 5 7" aria-hidden="true">
            <path d="M.5 0v7L4.500 3.500z" fill="#bdbdbd" />
          </svg>
        </button>
      </div>
    </div>
  );
}

function StatusBar() {
  return (
    <footer className="flex h-[22px] shrink-0 items-center border-t border-[#c6c6c6] bg-[#f0f0f0] text-[11px] text-[#444]">
      <span className="flex-1 pl-[7px]">Ready</span>
      <button aria-label="Normal view" className="flex h-full w-[38px] items-center justify-center bg-[#c9c9c9]">
        <svg width="13" height="13" viewBox="0 0 13 13" fill="none" stroke="#666" aria-hidden="true">
          <path d="M.5.5h12v12H.5zM4.500 0v13M8.500 0v13M0 4.500h13M0 8.500h13" />
        </svg>
      </button>
      <button aria-label="Page layout view" className="flex h-full w-[38px] items-center justify-center">
        <svg width="14" height="13" viewBox="0 0 14 13" fill="none" stroke="#666" aria-hidden="true">
          <path d="M.5.5h13v12H.5zM3.500 2.500h7v8h-7zM5 4.500h4M5 6.500h4M5 8.500h4" />
        </svg>
      </button>
      <button aria-label="Page break preview" className="flex h-full w-[38px] items-center justify-center">
        <svg width="14" height="13" viewBox="0 0 14 13" fill="none" stroke="#666" aria-hidden="true">
          <path d="M.5.5h13v12H.5zM5.500.5v7M9.500.5v7M0 7.500h10" />
        </svg>
      </button>
      <button aria-label="Zoom out" className="ml-[3px] flex w-3 items-center">
        <span className="h-0.5 w-1.5 bg-[#555]" />
      </button>
      <input
        type="range"
        aria-label="Zoom"
        min="0"
        max="200"
        defaultValue="69"
        className="h-3 w-[100px] appearance-none bg-[linear-gradient(#a5a5a5,#a5a5a5),linear-gradient(#a5a5a5,#a5a5a5)] bg-[length:100%_1px,1px_7px] bg-center bg-no-repeat [&::-webkit-slider-thumb]:h-[11px] [&::-webkit-slider-thumb]:w-1 [&::-webkit-slider-thumb]:appearance-none [&::-webkit-slider-thumb]:bg-[#555]"
      />
      <button aria-label="Zoom in" className="ml-1">
        <svg width="8" height="8" viewBox="0 0 8 8" aria-hidden="true">
          <path d="M0 4h8M4 0v8" stroke="#555" strokeWidth="2" />
        </svg>
      </button>
      <span className="w-[51px] pl-[15px]">70%</span>
    </footer>
  );
}

function Taskbar() {
  return (
    <div className="flex h-[5px] shrink-0 bg-black pl-[342px]">
      <div className="w-12 bg-[#303030]" />
      <div className="ml-[5px] w-2 bg-[#2f6b2f]" />
      <div className="w-8 bg-[#1f1f1f]" />
    </div>
  );
}

export default function App() {
  return (
    <div className="flex h-screen flex-col overflow-hidden bg-[#f0f0f0] font-['Open_Sans','Noto_Sans','DejaVu_Sans',sans-serif]">
      <MenuBar />
      <Ribbon />
      <Sheet />
      <SheetTabs />
      <StatusBar />
      <Taskbar />
    </div>
  );
}
